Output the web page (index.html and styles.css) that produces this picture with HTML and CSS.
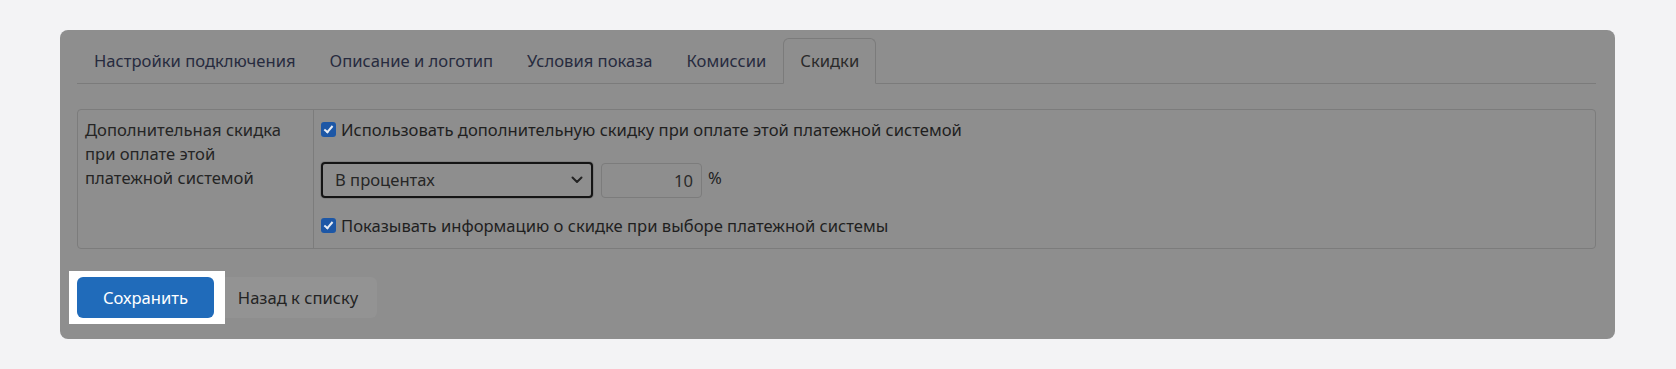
FILE: index.html
```html
<!DOCTYPE html>
<html lang="ru">
<head>
    <meta charset="UTF-8">
    <meta name="viewport" content="width=device-width, initial-scale=1.0">
    <title>Скидки</title>
    <link rel="stylesheet" href="styles.css">
</head>
<body>
    <div class="panel">
        <ul class="tabs">
            <li class="tab">Настройки подключения</li>
            <li class="tab">Описание и логотип</li>
            <li class="tab">Условия показа</li>
            <li class="tab">Комиссии</li>
            <li class="tab active">Скидки</li>
        </ul>

        <div class="form-table">
            <div class="form-label">Дополнительная скидка при оплате этой платежной системой</div>
            <div class="form-field">
                <label class="check-row">
                    <input type="checkbox" class="check" checked>
                    <span>Использовать дополнительную скидку при оплате этой платежной системой</span>
                </label>
                <div class="amount-row">
                    <div class="select-wrap">
                        <select class="select">
                            <option>В процентах</option>
                        </select>
                        <svg class="chevron" width="12" height="8" viewBox="0 0 12 8"><path d="M1.5 1.5 6 6l4.5-4.5" fill="none" stroke="#222" stroke-width="2" stroke-linecap="round" stroke-linejoin="round"/></svg>
                    </div>
                    <input type="text" class="amount" value="10">
                    <span class="unit">%</span>
                </div>
                <label class="check-row">
                    <input type="checkbox" class="check" checked>
                    <span>Показывать информацию о скидке при выборе платежной системы</span>
                </label>
            </div>
        </div>

        <div class="actions">
            <div class="spotlight">
                <button class="btn btn-primary">Сохранить</button>
            </div>
            <button class="btn btn-back">Назад к списку</button>
        </div>
    </div>
</body>
</html>
```

FILE: styles.css
```css
  body {
      font-family: 'Noto Sans', 'Open Sans', sans-serif;
      font-size: 16.6px;
      line-height: 24px;
      margin: 0;
      padding: 30px 61px 30px 60px;
      background-color: #f3f3f5;
      color: #1f1f1f;
  }
  .panel {
      background-color: #8e8e8e;
      border-radius: 8px;
      padding: 8px 19px 15px 17px;
      height: 286px;
  }
  .tabs {
      display: flex;
      list-style: none;
      margin: 0;
      padding: 0;
      border-bottom: 1px solid #7b7b7b;
  }
  .tab {
      padding: 10px 16px;
      border: 1px solid transparent;
      border-radius: 6px 6px 0 0;
      margin-bottom: -1px;
      color: #272b3e;
  }
  .tab.active {
      border-color: #7b7b7b #7b7b7b #8e8e8e;
      color: #2a2a2a;
  }
  .form-table {
      display: flex;
      margin-top: 25px;
      border: 1px solid #7c7c7c;
      border-radius: 4px;
  }
  .form-label {
      width: 212px;
      padding: 8px 16px 8px 7px;
      border-right: 1px solid #7c7c7c;
      color: #252525;
  }
  .form-field {
      flex: 1;
      padding: 8px 7px 10px;
  }
  .check-row {
      display: flex;
      align-items: flex-start;
      gap: 5px;
  }
  .check {
      appearance: none;
      width: 15px;
      height: 15px;
      margin: 4px 0 0;
      border-radius: 3px;
      background-color: #1d57a6;
      position: relative;
      flex: none;
  }
  .check::after {
      content: '';
      position: absolute;
      left: 5px;
      top: 2px;
      width: 3px;
      height: 7px;
      border: solid #e8edf5;
      border-width: 0 2px 2px 0;
      transform: rotate(40deg);
  }
  .amount-row {
      display: flex;
      align-items: center;
      margin: 20px 0 16px;
  }
  .select-wrap {
      position: relative;
  }
  .select {
      appearance: none;
      display: block;
      width: 272px;
      height: 36px;
      padding: 0 12px;
      font: inherit;
      color: #262626;
      background-color: #8e8e8e;
      border: 2px solid #141414;
      border-radius: 4px;
      box-shadow: 0 0 0 1px #7e7e7e;
  }
  .chevron {
      position: absolute;
      right: 10px;
      top: 14px;
  }
  .amount {
      width: 101px;
      height: 35px;
      margin-left: 8px;
      padding: 0 8px;
      box-sizing: border-box;
      font: inherit;
      color: #2a2a2a;
      text-align: right;
      background-color: #8e8e8e;
      border: 1px solid #7c7c7c;
      border-radius: 4px;
  }
  .unit {
      margin-left: 6px;
      margin-bottom: 4px;
      color: #222;
  }
  .actions {
      display: flex;
      align-items: center;
      margin-top: 22px;
      margin-left: -8px;
  }
  .spotlight {
      background-color: #fff;
      padding: 6px 11px 6px 8px;
      position: relative;
      z-index: 1;
  }
  .btn {
      font: inherit;
      height: 41px;
      border: none;
      border-radius: 6px;
      cursor: pointer;
  }
  .btn-primary {
      display: block;
      width: 137px;
      background-color: #206bba;
      color: #fff;
  }
  .btn-back {
      width: 158px;
      margin-left: -6px;
      background-color: #939393;
      color: #242424;
  }
```
